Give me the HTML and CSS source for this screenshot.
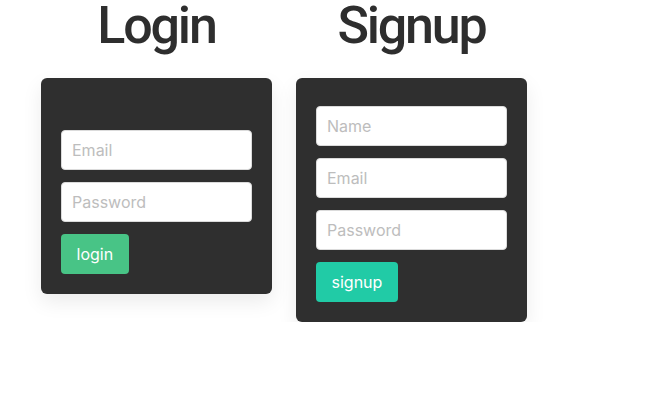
FILE: index.html
```html
<!DOCTYPE html>
<html>
<head>
<meta charset="utf-8">
<link rel="stylesheet" href="styles.css">
</head>
<body>
<div class="page">
  <section class="col">
    <h1 class="title">Login</h1>
    <form class="card card-login">
      <input class="field" type="text" placeholder="Email">
      <input class="field" type="password" placeholder="Password">
      <div><button class="btn btn-login" type="button">login</button></div>
    </form>
  </section>
  <section class="col">
    <h1 class="title">Signup</h1>
    <form class="card card-signup">
      <input class="field" type="text" placeholder="Name">
      <input class="field" type="text" placeholder="Email">
      <input class="field" type="password" placeholder="Password">
      <div><button class="btn btn-signup" type="button">signup</button></div>
    </form>
  </section>
</div>
</body>
</html>
```
FILE: styles.css
```css
html, body {
  margin: 0;
  padding: 0;
  background: #ffffff;
}
.page {
  display: flex;
  align-items: flex-start;
  gap: 24px;
  padding-left: 41px;
}
.col {
  width: 231px;
  display: flex;
  flex-direction: column;
}
.title {
  margin: 0 0 26px 0;
  font-family: Roboto, "Liberation Sans", sans-serif;
  font-weight: 500;
  font-size: 52px;
  line-height: 52px;
  letter-spacing: -2.2px;
  color: #2e2e2e;
  text-align: center;
}
.card {
  background: #2f2f2f;
  border-radius: 6px;
  padding: 28px 20px 20px 20px;
  display: flex;
  flex-direction: column;
  gap: 12px;
  box-shadow: 0 8px 20px rgba(0, 0, 0, 0.08);
}
.card-login {
  padding-top: 52px;
}
.field {
  box-sizing: border-box;
  width: 100%;
  height: 40px;
  margin: 0;
  padding: 0 10px;
  border: 1px solid #dbdbdb;
  border-radius: 4px;
  background: #fff;
  font-family: Inter, "Noto Sans", sans-serif;
  font-size: 16px;
  color: #363636;
  outline: none;
}
.field::placeholder {
  color: #bdbdbd;
}
.btn {
  height: 40px;
  padding: 0 15.5px;
  border: none;
  border-radius: 4px;
  font-family: Inter, "Noto Sans", sans-serif;
  font-size: 16px;
  color: #fff;
  cursor: pointer;
}
.btn-login {
  background: #48c486;
}
.btn-signup {
  background: #21cba6;
}
```
